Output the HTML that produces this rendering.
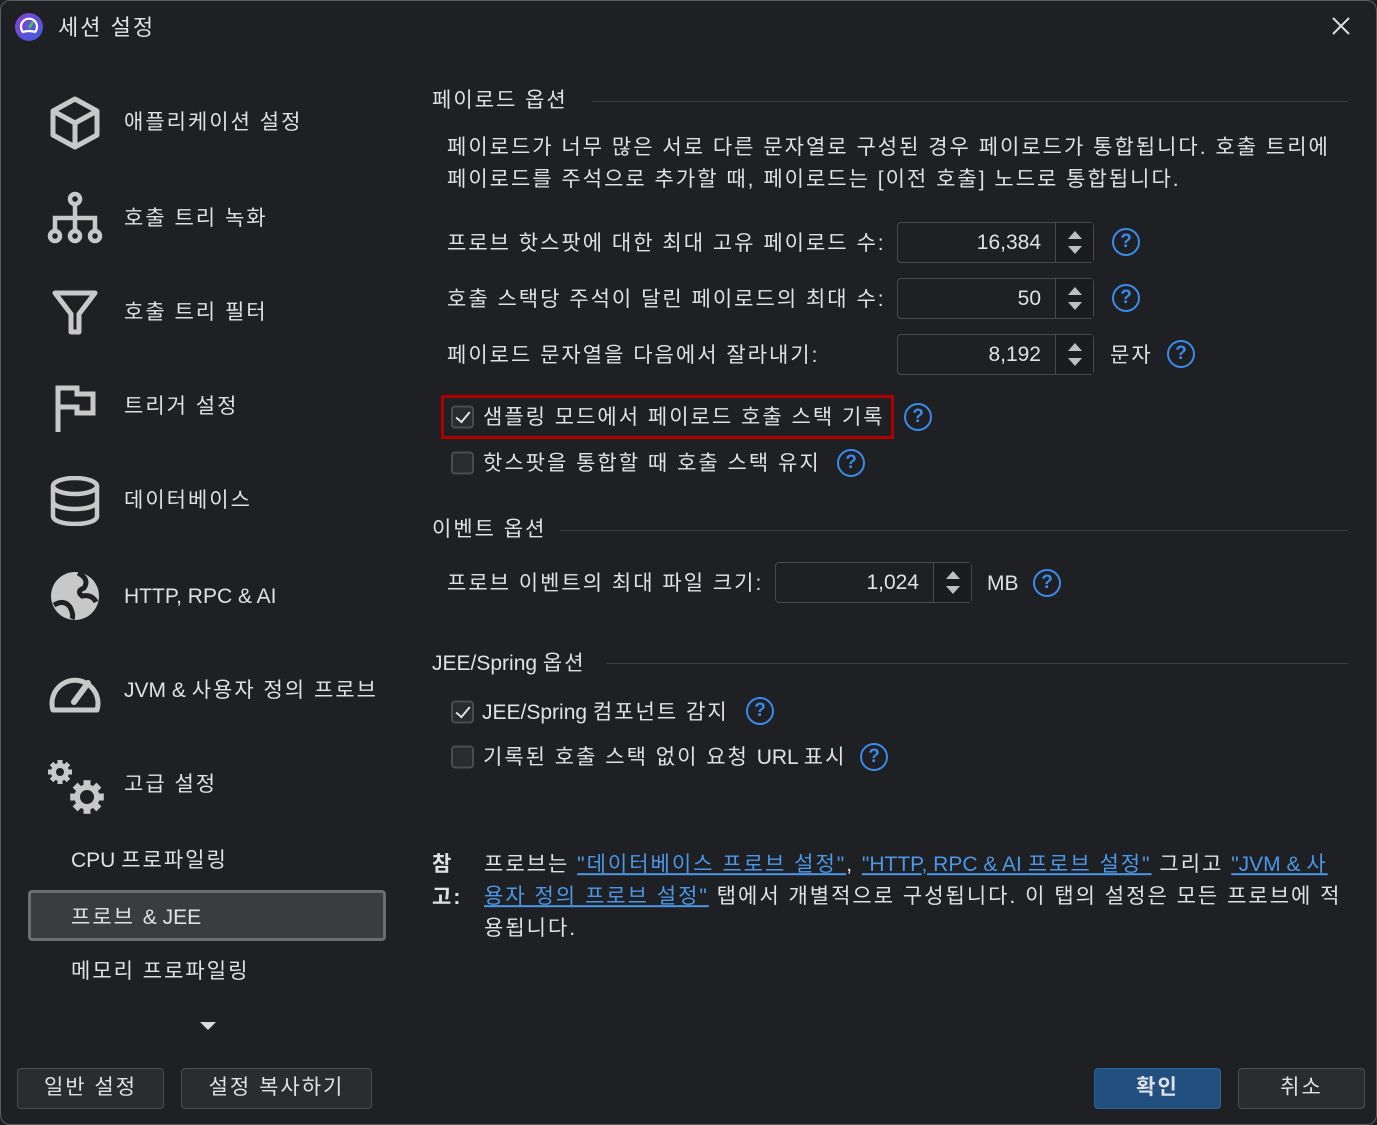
<!DOCTYPE html>
<html><head><meta charset="utf-8"><style>
*{margin:0;padding:0;box-sizing:border-box}
body{width:1377px;height:1125px;background:#1f2023;font-family:"Liberation Sans","Noto Sans CJK KR",sans-serif;color:#dfe1e5;font-size:21px;position:relative;overflow:hidden;letter-spacing:2px}
.l{letter-spacing:0}
.win{position:absolute;left:0;top:0;width:1377px;height:1125px;border:1px solid #5a5b5e;border-radius:10px}
.t{position:absolute;white-space:nowrap;line-height:1;transform:translateY(-42%)}
.ic{position:absolute}
.hl{position:absolute;height:1px;background:#3d3e42}
.spin{position:absolute;width:197px;height:41px;border:1px solid #47494d;border-radius:4px;background:#1f2023;letter-spacing:0}
.spin .v{position:absolute;right:52px;top:50%;transform:translateY(-50%);font-size:21px}
.spin .b{position:absolute;right:0;top:0;width:38px;height:100%;border-left:1px solid #47494d;background:#1b1c1e}
.spin .b:before{content:"";position:absolute;left:12px;top:8px;border-left:7px solid transparent;border-right:7px solid transparent;border-bottom:8px solid #bfbfbf}
.spin .b:after{content:"";position:absolute;left:12px;bottom:8px;border-left:7px solid transparent;border-right:7px solid transparent;border-top:8px solid #bfbfbf}
.q{position:absolute;width:28px;height:28px;border:2.5px solid #3b8beb;border-radius:50%;color:#3b8beb;font-size:19px;font-weight:bold;text-align:center;line-height:23px;transform:translate(-50%,-50%);letter-spacing:0}
.cb{position:absolute;width:23px;height:23px;border:2px solid #4a4c50;border-radius:4px;background:#2a2b2e;transform:translateY(-50%)}
.cb.on:after{content:"";position:absolute;left:6px;top:1px;width:6px;height:12px;border-right:2.5px solid #e0e0e0;border-bottom:2.5px solid #e0e0e0;transform:rotate(40deg)}
.btn{position:absolute;height:41px;border:1px solid #4a4c50;border-radius:4px;background:#2b2c2f;text-align:center;line-height:38px;font-size:21px}
a{color:#4b97e8;text-decoration:underline}
</style></head><body>
<div class="win"></div>
<svg class="ic" style="left:15px;top:13px" width="28" height="28" viewBox="0 0 28 28"><defs><linearGradient id="g" x1="0" y1="0" x2="1" y2="1"><stop offset="0" stop-color="#8a3fd0"/><stop offset="1" stop-color="#3a5ee0"/></linearGradient></defs><circle cx="14" cy="14" r="14" fill="url(#g)"/><path d="M8 19 A8 8 0 1 1 20 19 Q14 17 8 19Z" fill="none" stroke="#fff" stroke-width="2.2"/><path d="M14 15 L18 9" stroke="#4c4" stroke-width="2.5"/></svg>
<div class="t" style="left:58px;top:26px;font-size:22px">세션 설정</div>
<svg class="ic" style="left:1331px;top:16px" width="20" height="20"><path d="M2 2L18 18M18 2L2 18" stroke="#ddd" stroke-width="2"/></svg>

<svg class="ic" style="left:48px;top:96px" width="54" height="54" viewBox="0 0 54 54" fill="none" stroke="#c8c8c8" stroke-width="5" stroke-linejoin="round"><path d="M27 3L49 15V39L27 51L5 39V15Z"/><path d="M5 15L27 27L49 15M27 27V51"/></svg>
<svg class="ic" style="left:47px;top:190px" width="56" height="56" viewBox="0 0 56 56" fill="none" stroke="#c8c8c8" stroke-width="4.5"><circle cx="28" cy="9" r="5"/><path d="M28 14V28M8 42V28H48V42M28 28V42"/><circle cx="8" cy="46" r="5"/><circle cx="28" cy="46" r="5"/><circle cx="48" cy="46" r="5"/></svg>
<svg class="ic" style="left:52px;top:290px" width="46" height="46" viewBox="0 0 46 46"><path d="M3 3H43L27 24V42H19V24Z" fill="none" stroke="#c8c8c8" stroke-width="5" stroke-linejoin="round"/></svg>
<svg class="ic" style="left:55px;top:385px" width="44" height="48" viewBox="0 0 44 48" fill="none" stroke="#c8c8c8" stroke-width="5"><path d="M3 47V3H22V9H38V28H22V22H3"/></svg>
<svg class="ic" style="left:49px;top:476px" width="52" height="50" viewBox="0 0 52 50" fill="none" stroke="#c8c8c8" stroke-width="4.5"><ellipse cx="26" cy="10" rx="22" ry="8"/><path d="M4 10V40C4 45 14 48 26 48S48 45 48 40V10M4 25C4 30 14 33 26 33S48 30 48 25"/></svg>
<svg class="ic" style="left:48px;top:569px" width="54" height="54" viewBox="0 0 54 54"><circle cx="27" cy="27" r="24" fill="#c8c8c8"/><path d="M30 4Q42 10 36 19Q28 22 34 27Q44 25 48 33" fill="none" stroke="#1f2023" stroke-width="5"/><path d="M6 36Q16 30 22 38Q26 46 24 50" fill="none" stroke="#1f2023" stroke-width="5"/></svg>
<svg class="ic" style="left:48px;top:668px" width="54" height="46" viewBox="0 0 54 46" fill="none" stroke="#c8c8c8" stroke-width="5"><path d="M5 42A23 23 0 1 1 49 42Z" stroke-linejoin="round"/><path d="M26 34L40 15" stroke-width="6" stroke-linecap="round"/></svg>
<svg class="ic" style="left:46px;top:755px" width="60" height="60" viewBox="0 0 60 60" fill="#c8c8c8"><g transform="translate(14,17)"><circle r="9"/><g id="tt"><rect x="-2.5" y="-12" width="5" height="6"/><rect x="-2.5" y="6" width="5" height="6"/><rect x="-12" y="-2.5" width="6" height="5"/><rect x="6" y="-2.5" width="6" height="5"/></g><use href="#tt" transform="rotate(45)"/><circle r="4" fill="#1f2023"/></g><g transform="translate(41,42) scale(1.4)"><circle r="9"/><use href="#tt"/><use href="#tt" transform="rotate(45)"/><circle r="5" fill="#1f2023"/></g></svg>

<div class="t" style="left:124px;top:121px">애플리케이션 설정</div>
<div class="t" style="left:124px;top:217px">호출 트리 녹화</div>
<div class="t" style="left:124px;top:311px">호출 트리 필터</div>
<div class="t" style="left:124px;top:405px">트리거 설정</div>
<div class="t" style="left:124px;top:499px">데이터베이스</div>
<div class="t l" style="left:124px;top:595px">HTTP, RPC &amp; AI</div>
<div class="t" style="left:124px;top:689px"><span class="l">JVM &amp; </span>사용자 정의 프로브</div>
<div class="t" style="left:124px;top:783px">고급 설정</div>
<div class="t" style="left:71px;top:859px"><span class="l">CPU </span>프로파일링</div>
<div style="position:absolute;left:28px;top:890px;width:358px;height:51px;border:3px solid #6b6d70;border-radius:4px;background:#3b3c3f"></div>
<div class="t" style="left:71px;top:916px">프로브 <span class="l">&amp; JEE</span></div>
<div class="t" style="left:71px;top:970px">메모리 프로파일링</div>
<div style="position:absolute;left:200px;top:1022px;border-left:8px solid transparent;border-right:8px solid transparent;border-top:8px solid #ddd"></div>
<div class="btn" style="left:17px;top:1068px;width:147px">일반 설정</div>
<div class="btn" style="left:181px;top:1068px;width:191px">설정 복사하기</div>
<div class="btn" style="left:1094px;top:1068px;width:127px;background:#21507f;border-color:#2f6398;font-weight:bold">확인</div>
<div class="btn" style="left:1238px;top:1068px;width:127px">취소</div>

<div class="t" style="left:432px;top:99px">페이로드 옵션</div>
<div class="hl" style="left:592px;top:101px;width:756px"></div>
<div class="t" style="left:447px;top:146px">페이로드가 너무 많은 서로 다른 문자열로 구성된 경우 페이로드가 통합됩니다. 호출 트리에</div>
<div class="t" style="left:447px;top:178px">페이로드를 주석으로 추가할 때, 페이로드는 [이전 호출] 노드로 통합됩니다.</div>

<div class="t" style="left:447px;top:242px">프로브 핫스팟에 대한 최대 고유 페이로드 수:</div>
<div class="spin" style="left:897px;top:222px"><span class="v">16,384</span><span class="b"></span></div>
<div class="q" style="left:1126px;top:242px">?</div>
<div class="t" style="left:447px;top:298px">호출 스택당 주석이 달린 페이로드의 최대 수:</div>
<div class="spin" style="left:897px;top:278px"><span class="v">50</span><span class="b"></span></div>
<div class="q" style="left:1126px;top:298px">?</div>
<div class="t" style="left:447px;top:354px">페이로드 문자열을 다음에서 잘라내기:</div>
<div class="spin" style="left:897px;top:334px"><span class="v">8,192</span><span class="b"></span></div>
<div class="t" style="left:1110px;top:354px">문자</div>
<div class="q" style="left:1181px;top:354px">?</div>

<div style="position:absolute;left:441px;top:395px;width:453px;height:44px;border:3px solid #b00000"></div>
<div class="cb on" style="left:451px;top:417px"></div>
<div class="t" style="left:483px;top:416px">샘플링 모드에서 페이로드 호출 스택 기록</div>
<div class="q" style="left:918px;top:417px">?</div>
<div class="cb" style="left:451px;top:463px"></div>
<div class="t" style="left:483px;top:462px">핫스팟을 통합할 때 호출 스택 유지</div>
<div class="q" style="left:851px;top:463px">?</div>

<div class="t" style="left:432px;top:528px">이벤트 옵션</div>
<div class="hl" style="left:560px;top:530px;width:788px"></div>
<div class="t" style="left:447px;top:582px">프로브 이벤트의 최대 파일 크기:</div>
<div class="spin" style="left:775px;top:562px"><span class="v">1,024</span><span class="b"></span></div>
<div class="t l" style="left:987px;top:582px">MB</div>
<div class="q" style="left:1047px;top:583px">?</div>

<div class="t" style="left:432px;top:662px"><span class="l">JEE/Spring </span>옵션</div>
<div class="hl" style="left:606px;top:663px;width:742px"></div>
<div class="cb on" style="left:451px;top:712px"></div>
<div class="t" style="left:482px;top:711px"><span class="l">JEE/Spring </span>컴포넌트 감지</div>
<div class="q" style="left:760px;top:711px">?</div>
<div class="cb" style="left:451px;top:757px"></div>
<div class="t" style="left:483px;top:756px">기록된 호출 스택 없이 요청 <span class="l">URL </span>표시</div>
<div class="q" style="left:874px;top:757px">?</div>

<div class="t" style="left:432px;top:863px;font-weight:bold">참</div>
<div class="t" style="left:432px;top:896px;font-weight:bold">고:</div>
<div class="t" style="left:484px;top:863px">프로브는 <a>"데이터베이스 프로브 설정"</a>, <a><span class="l">"HTTP, RPC &amp; AI </span>프로브 설정"</a> 그리고 <a><span class="l">"JVM &amp; </span>사</a></div>
<div class="t" style="left:484px;top:895px"><a>용자 정의 프로브 설정"</a> 탭에서 개별적으로 구성됩니다. 이 탭의 설정은 모든 프로브에 적</div>
<div class="t" style="left:484px;top:927px">용됩니다.</div>
</body></html>
